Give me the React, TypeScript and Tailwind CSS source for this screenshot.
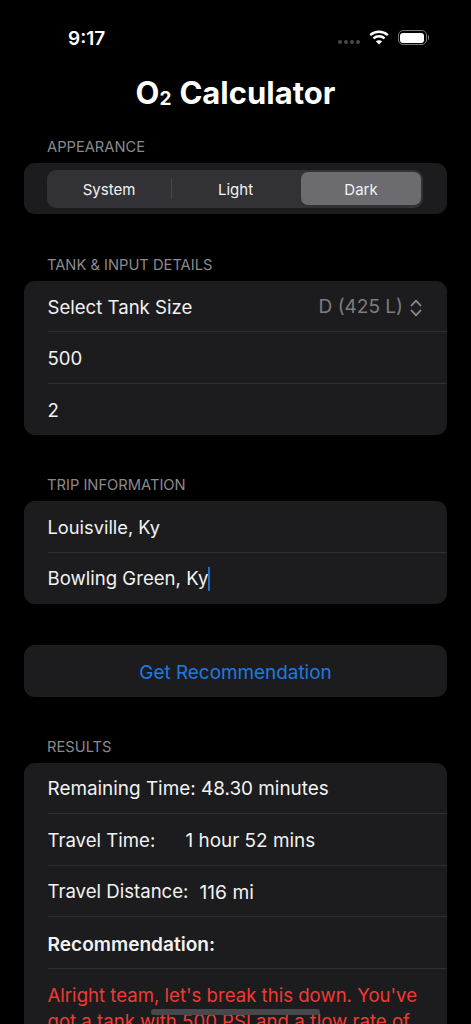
function Row({ children, last }: { children: React.ReactNode; last?: boolean }) {
  return (
    <div className="relative flex h-[51.4px] items-center whitespace-nowrap pl-[23.5px] pr-[30px] pt-[2px] text-[18.6px] text-[#f2f2f3]">
      {children}
      {!last && <div className="absolute bottom-0 left-[23.5px] right-0 h-px bg-[#2f2f32]"></div>}
    </div>
  );
}

function Label({ children }: { children: React.ReactNode }) {
  return <div className="h-[17px] pl-[47px] pt-[1px] text-[14.7px] leading-[17px] text-[#8a8a8e]">{children}</div>;
}

export default function App() {
  return (
    <div
      className="relative h-[1024px] w-[471px] overflow-hidden bg-black"
      style={{ fontFamily: "Inter, 'Noto Sans', sans-serif" }}
    >
      {/* Status bar */}
      <div className="flex h-[73px] items-start justify-between pl-[68px] pr-[42px] pt-[27px]">
        <span className="text-[19px] font-semibold leading-[24px] text-white">9:17</span>
        <div className="flex items-center gap-[8px] pt-[3px]">
          <div className="mt-[9px] flex gap-[2px]">
            <span className="h-[4px] w-[4px] rounded-full bg-[#48484a]"></span>
            <span className="h-[4px] w-[4px] rounded-full bg-[#48484a]"></span>
            <span className="h-[4px] w-[4px] rounded-full bg-[#48484a]"></span>
            <span className="h-[4px] w-[4px] rounded-full bg-[#48484a]"></span>
          </div>
          <svg width="20" height="15" viewBox="0 0 20 15" fill="none" className="mx-[1px]">
            <path d="M1.2 5.2C6.2 0.6 13.8 0.6 18.8 5.2" stroke="white" strokeWidth="2.4" />
            <path d="M4.4 8.4C7.6 5.6 12.4 5.6 15.6 8.4" stroke="white" strokeWidth="2.4" />
            <path d="M10 14.6L6.8 11.2C8.6 9.8 11.4 9.8 13.2 11.2Z" fill="white" />
          </svg>
          <div className="flex items-center">
            <div className="h-[15px] w-[29px] rounded-[5px] border border-[#77777a] p-[1.5px]">
              <div className="h-full w-full rounded-[3px] bg-white"></div>
            </div>
            <div className="ml-[1px] h-[5px] w-[1.5px] rounded-r-full bg-[#77777a]"></div>
          </div>
        </div>
      </div>

      {/* Title */}
      <h1 className="flex h-[39px] items-center justify-center text-[31px] font-bold leading-[39px] text-white">
        O<span className="mt-[12px] text-[19px] leading-none">2</span>
        <span className="ml-[8px]">Calculator</span>
      </h1>

      <div className="pt-[26px]">
        <Label>APPEARANCE</Label>
      </div>
      <div className="mx-[24px] mt-[8px] flex h-[51px] items-center rounded-[11px] bg-[#1c1c1e] px-[23px]">
        <div className="relative flex h-[38px] w-[376px] items-center rounded-[9px] bg-[#323236] text-[15px] text-[#f2f2f3]">
          <div className="flex w-[124px] justify-center pt-[3px]">System</div>
          <div className="h-[21px] w-px bg-[#48484a]"></div>
          <div className="flex w-[127px] justify-center pt-[3px]">Light</div>
          <div className="ml-[2px] flex h-[33px] w-[120px] items-center justify-center rounded-[7px] bg-[#6b6b70] pt-[3px]">
            Dark
          </div>
        </div>
      </div>

      <div className="pt-[42px]">
        <Label>TANK &amp; INPUT DETAILS</Label>
      </div>
      <div className="mx-[24px] mt-[8px] overflow-hidden rounded-[11px] bg-[#1c1c1e]">
        <Row>
          <span>Select Tank Size</span>
          <span className="ml-auto flex items-center text-[19px] text-[#7d7d81]">
            D (425 L)
            <svg width="12" height="18" viewBox="0 0 12 18" fill="none" className="ml-[7px] mr-[-5px]">
              <path
                d="M1.5 6.5L6 1.7L10.5 6.5M1.5 11.5L6 16.3L10.5 11.5"
                stroke="#8a8a8e"
                strokeWidth="1.8"
                strokeLinecap="round"
                strokeLinejoin="round"
              />
            </svg>
          </span>
        </Row>
        <Row>500</Row>
        <Row last>2</Row>
      </div>

      <div className="pt-[41px]">
        <Label>TRIP INFORMATION</Label>
      </div>
      <div className="mx-[24px] mt-[8px] overflow-hidden rounded-[11px] bg-[#1c1c1e]">
        <Row>
          <span className="text-[18.3px]">Louisville, Ky</span>
        </Row>
        <Row last>
          Bowling Green, Ky
          <span className="h-[24px] w-[2px] bg-[#1c6fc4]"></span>
        </Row>
      </div>

      <div className="mx-[24px] mt-[41px] flex h-[52px] items-center justify-center rounded-[11px] bg-[#1c1c1e] pt-[4px] text-[18.9px] text-[#1f7ae0]">
        Get Recommendation
      </div>

      <div className="pt-[41px]">
        <Label>RESULTS</Label>
      </div>
      <div className="mx-[24px] mt-[8px] overflow-hidden rounded-t-[11px] bg-[#1c1c1e]">
        <Row>
          <span className="text-[18.9px]">Remaining Time: 48.30 minutes</span>
        </Row>
        <Row>
          <span className="w-[138px]">Travel Time:</span>
          <span className="text-[18.9px]">1 hour 52 mins</span>
        </Row>
        <Row>
          <span className="w-[152px]">Travel Distance:</span>
          <span className="text-[19.2px]">116 mi</span>
        </Row>
        <Row>
          <span className="text-[19.1px] font-semibold">Recommendation:</span>
        </Row>
        <div className="pl-[23.5px] pr-[20px] pt-[13px] text-[18.6px] leading-[26px] text-[#f03a34]">
          Alright team, let's break this down. You've got a tank with 500 PSI and a flow rate of
        </div>
      </div>

      {/* Home indicator */}
      <div className="absolute left-[151px] top-[1009px] h-[6px] w-[169px] rounded-full bg-[#48484c]"></div>
    </div>
  );
}
